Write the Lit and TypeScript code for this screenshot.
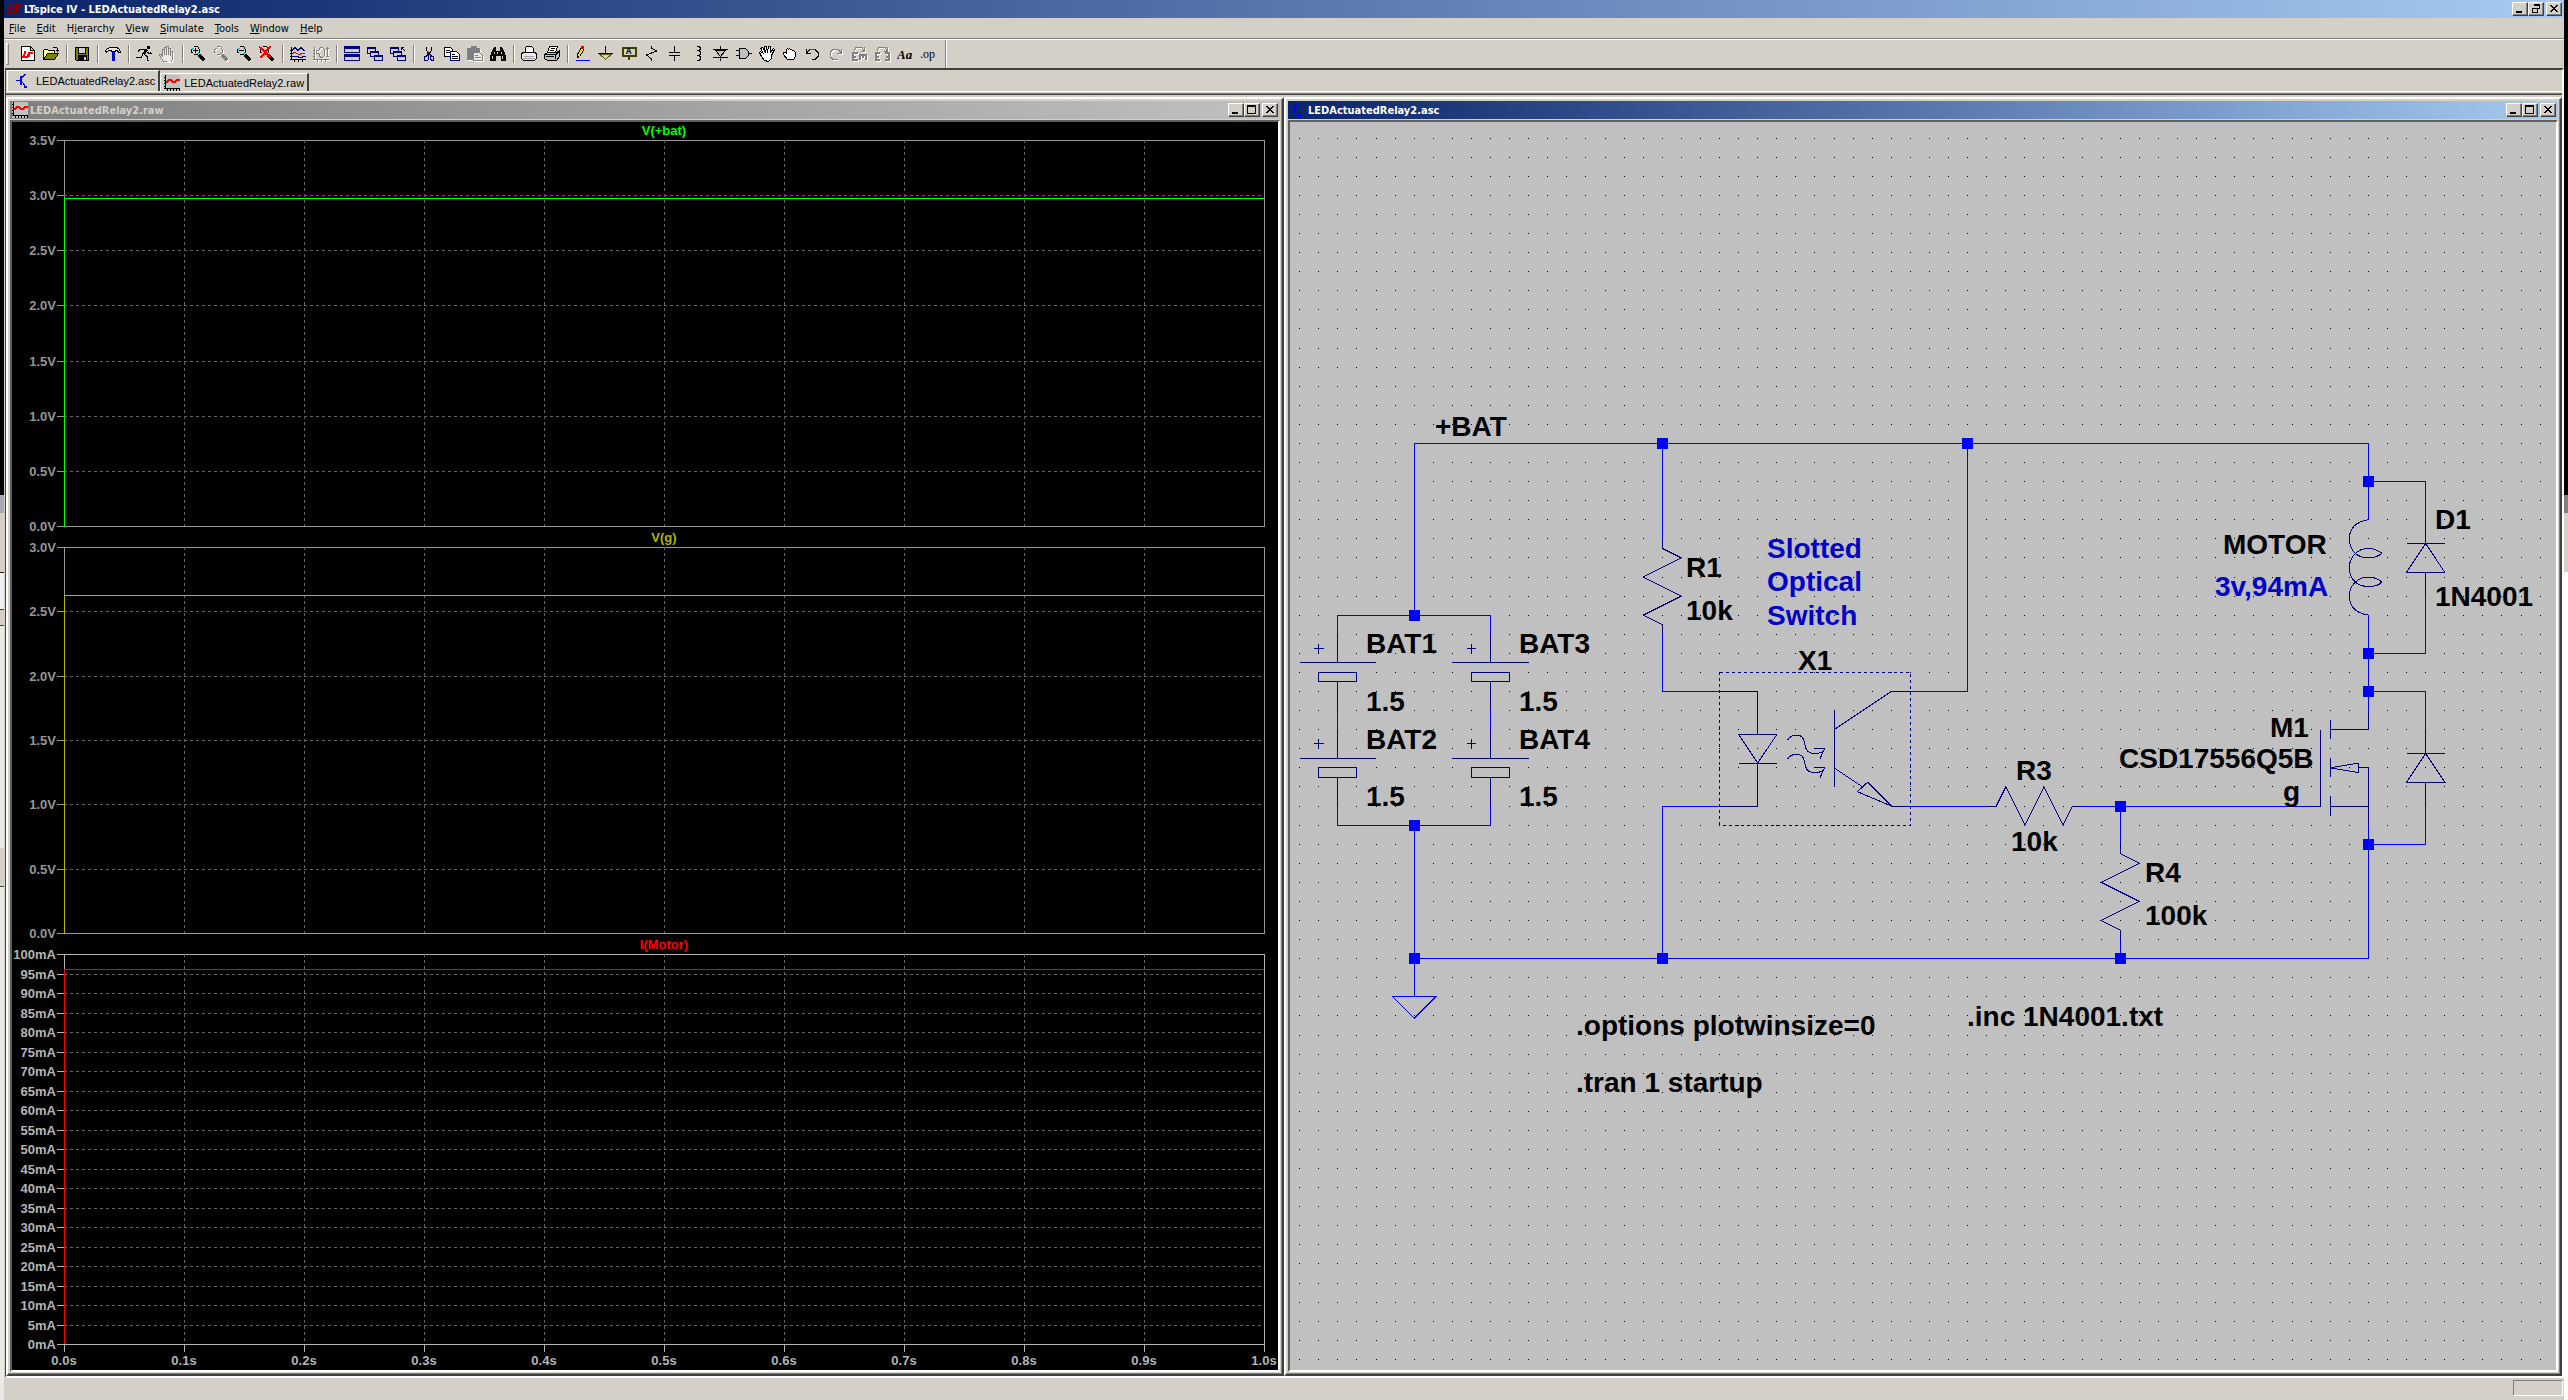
import { LitElement, css, html, svg } from "lit";
import { customElement, property } from "lit/decorators.js";

interface Pane {
  title: string;
  color: string;
  axis: string;
  top: number;
  bottom: number;
  trace: number;
  labels: string[];
}

interface Tool {
  name: string;
  icon: unknown;
  disabled?: boolean;
}

const volts = (max: number) =>
  Array.from({ length: max * 2 + 1 }, (_, i) => `${(i / 2).toFixed(1)}V`);

const PANES: Pane[] = [
  { title: "V(+bat)", color: "#00ff00", axis: "#969696", top: 18, bottom: 404, trace: 76, labels: volts(3.5) },
  { title: "V(g)", color: "#b4b400", axis: "#969696", top: 425, bottom: 811, trace: 473, labels: volts(3) },
  {
    title: "I(Motor)",
    color: "#ff0000",
    axis: "#b4b4b4",
    top: 832,
    bottom: 1222,
    trace: 847,
    labels: Array.from({ length: 21 }, (_, i) => `${i * 5}mA`),
  },
];

@customElement("wave-plot")
export class WavePlot extends LitElement {
  private left = 52;
  private right = 1252;

  private renderPane(pane: Pane) {
    const { left, right } = this;
    const step = (pane.bottom - pane.top) / (pane.labels.length - 1);
    const rows = pane.labels.map((label, i) => ({
      label,
      y: Math.round(pane.bottom - i * step),
    }));
    return svg`
      <g stroke=${pane.axis}>
        <rect x=${left + 0.5} y=${pane.top + 0.5} width=${right - left} height=${pane.bottom - pane.top} fill="none" />
        ${rows.map((r) => svg`<path d="M45 ${r.y + 0.5}H${left}" />`)}
      </g>
      <g class="grid">
        ${rows.slice(1, -1).map((r) => svg`<path d="M${left} ${r.y + 0.5}H${right}" />`)}
        ${Array.from({ length: 9 }, (_, i) => svg`
          <path d="M${left + 120 * (i + 1) + 0.5} ${pane.top}V${pane.bottom}" />`)}
      </g>
      <path d="M${left + 0.5} ${pane.bottom + 1}V${pane.trace + 0.5}H${right}" stroke=${pane.color} fill="none" />
      ${rows.map((r) => svg`<text x="44" y=${r.y + 5} text-anchor="end" fill=${pane.axis}>${r.label}</text>`)}
      <text x=${(left + right) / 2} y=${pane.top - 5} text-anchor="middle" fill=${pane.color}>${pane.title}</text>
    `;
  }

  render() {
    return html`
      <svg viewBox="0 0 1266 1248">
        ${PANES.map((pane) => this.renderPane(pane))}
        ${Array.from({ length: 11 }, (_, i) => svg`
          <path d="M${this.left + 120 * i + 0.5} 1222v8" stroke="#b4b4b4" />
          <text x=${this.left + 120 * i} y="1243" text-anchor="middle" fill="#b4b4b4">${(i / 10).toFixed(1)}s</text>`)}
      </svg>
    `;
  }

  static styles = css`
    :host {
      display: block;
      background: #000;
    }

    svg {
      display: block;
      width: 100%;
      height: auto;
    }

    path,
    rect {
      shape-rendering: crispEdges;
    }

    .grid {
      stroke: #646464;
      stroke-dasharray: 3 3;
    }

    text {
      font: bold 13px "Liberation Sans", Arial, sans-serif;
    }
  `;
}

// Wires and symbols are in schematic grid steps
const GRID = 19.083;
const GRID_X = 9.75;
const GRID_Y = 16.1;

const WIRES = [
  "M6 25V16H56V20M19 16V21M35 16V29H32",
  "M2 26V25H10V26M2 30V31M10 30V31M2 35V36H10V35M6 36V45M6 43H56V36",
  "M19 26V29H22M22 35H19V43M32 35H36M41 35H53M43 35V37M43 42V43",
  "M56 25V30M56 18H59V20M59 24V27H56M56 29H59V31M59 35V37H56",
  "M4.87 45H7.13L6 46.13Z",
].join("");

const resistorDown = (x: number, y: number) =>
  `M${x} ${y}v.5l1 .5l-2 1l2 1l-2 1l1 .5v.5`;

const battery = (x: number, y: number) =>
  `M${x} ${y}v1.5M${x - 2} ${y + 1.5}h4M${x - 1} ${y + 2}h2v.5h-2zM${x} ${y + 2.5}V${y + 4}` +
  `M${x - 1.25} ${y + 0.75}h.5M${x - 1} ${y + 0.5}v.5`;

const diodeUp = (x: number, y: number) =>
  `M${x} ${y}v1.25M${x - 1} ${y + 1.25}h2M${x} ${y + 1.25}l1 1.5h-2zM${x} ${y + 2.75}V${y + 4}`;

const photon = (y: number) =>
  `M25.55 ${y + 0.3}C25.8 ${y - 0.05} 26.35 ${y - 0.1} 26.45 ${y + 0.4}C26.5 ${y + 0.8} 26.6 ${y + 1} 27 ${y + 1}` +
  `C27.3 ${y + 1} 27.45 ${y + 0.9} 27.5 ${y + 0.75}M27 ${y + 0.75}H27.5L27.25 ${y + 1.3}`;

const SYMBOLS = [
  battery(2, 26),
  battery(2, 31),
  battery(10, 26),
  battery(10, 31),
  resistorDown(19, 21),
  resistorDown(43, 37),
  "M36 35h.5l.5 -1l1 2l1 -2l1 2l.5 -1h.5",
  "M22 29H24V31.25M23 31.25H25L24 32.75ZM23 32.75H25M24 32.75V35H22",
  photon(31.25),
  photon(32.25),
  "M28 30V34M28 31L31 29H32M28 33L29.5 34M31 35L29.22 34.25L29.76 33.75ZM31 35H32",
  "M56 20C55.4 20.1 55 20.4 55 21C55 21.6 55.4 22 56 22C56.4 22 56.6 21.85 56.7 21.75C56.5 21.6 56.3 21.5 56 21.5",
  "C55.4 21.5 55 22 55 22.5C55 23.1 55.4 23.5 56 23.5C56.4 23.5 56.6 23.4 56.7 23.25C56.5 23.1 56.3 23 56 23",
  "C55.4 23 55 23.5 55 24C55 24.6 55.4 24.9 56 25",
  diodeUp(59, 20),
  diodeUp(59, 31),
  "M56 30V31H54M54 30.5V31.5M54 32.5V33.5M54 34.5V35.5M54 35H56M53 35H53.5V31",
  "M54 33L55.5 32.75V33.25ZM55.5 33H56V36",
].join("");

const JUNCTIONS = [
  [19, 16], [35, 16], [56, 18], [6, 25], [56, 27], [56, 29],
  [43, 35], [6, 36], [56, 37], [6, 43], [19, 43], [43, 43],
];

const LABELS: [number, number, string][] = [
  [145, 314, "+BAT"],
  [396, 455, "R1"],
  [396, 498, "10k"],
  [76, 531, "BAT1"],
  [76, 589, "1.5"],
  [76, 627, "BAT2"],
  [76, 684, "1.5"],
  [229, 531, "BAT3"],
  [229, 589, "1.5"],
  [229, 627, "BAT4"],
  [229, 684, "1.5"],
  [508, 548, "X1"],
  [726, 658, "R3"],
  [721, 729, "10k"],
  [855, 760, "R4"],
  [855, 803, "100k"],
  [933, 432, "MOTOR"],
  [1145, 407, "D1"],
  [1145, 484, "1N4001"],
  [980, 615, "M1"],
  [829, 646, "CSD17556Q5B"],
  [993, 679, "g"],
  [286, 913, ".options plotwinsize=0"],
  [286, 970, ".tran 1 startup"],
  [677, 904, ".inc 1N4001.txt"],
];

const COMMENTS: [number, number, string][] = [
  [477, 436, "Slotted"],
  [477, 469, "Optical"],
  [477, 503, "Switch"],
  [925, 474, "3v,94mA"],
];

@customElement("schematic-view")
export class SchematicView extends LitElement {
  private gridDots() {
    let d = "";
    for (let j = 0; j < 65; j++) {
      for (let i = 0; i < 66; i++) {
        d += `M${Math.floor(GRID_X + GRID * i)} ${Math.floor(GRID_Y + GRID * j)}h1v1h-1z`;
      }
    }
    return d;
  }

  render() {
    return html`
      <svg viewBox="0 0 1266 1248">
        <path class="dots" d=${this.gridDots()} />
        <g class="drawing" transform="translate(${GRID_X} ${GRID_Y}) scale(${GRID})">
          <path class="symbol" d=${SYMBOLS} />
          <rect class="package" x="22" y="28" width="10" height="8" />
          <path class="wire" d=${WIRES} />
          ${JUNCTIONS.map(([x, y]) => svg`
            <rect class="junction" x=${x - 0.28} y=${y - 0.28} width=".576" height=".576" />`)}
        </g>
        ${LABELS.map(([x, y, label]) => svg`<text x=${x} y=${y}>${label}</text>`)}
        ${COMMENTS.map(([x, y, label]) => svg`<text class="comment" x=${x} y=${y}>${label}</text>`)}
      </svg>
    `;
  }

  static styles = css`
    :host {
      display: block;
      background: #c0c0c0;
    }

    svg {
      display: block;
      width: 100%;
      height: auto;
    }

    .dots {
      fill: #000;
      shape-rendering: crispEdges;
    }

    .drawing * {
      fill: none;
      stroke-width: 1px;
      vector-effect: non-scaling-stroke;
      shape-rendering: crispEdges;
    }

    .wire {
      stroke: #0000ff;
    }

    .symbol {
      stroke: #000080;
    }

    .package {
      stroke: #000080;
      stroke-dasharray: 3 3;
    }

    .drawing .junction {
      fill: #0000ff;
    }

    text {
      font: bold 28px "Liberation Sans", Arial, sans-serif;
    }

    .comment {
      fill: #0000c8;
    }
  `;
}

const lens = svg`
  <path d="M3.5.5h4M1.5 2.5v4M3.5 8.5h4M9.5 2.5v4M2 2.5l1.5 -1M8 1.5l1 1M2 6.5l1.5 1M9 6.5l-1 1" />
  <path d="M2.5 4v-1.5h1.5M7 7.5h1.5v-1.5" stroke="#00c8d8" />
  <path d="M9 9l5.5 5.5" stroke-width="3" />
`;

const waves = svg`
  <path d="M1.5 1v13M0 13.5h16M0 4.5h2M0 7.5h2M0 10.5h2M4.5 13v3M8.5 13v3M12.5 13v3" />
  <path d="M2 4.5l3 -3l3 3l3 -3l3 3h1M2 10.5h6l1 1h3l1 -1h3" stroke="#000080" />
  <path d="M2 7.5l3 -1l4 2l3 -1h3" stroke="#f00" />
`;

const cascade = svg`
  <g stroke="#000080">
    <rect x=".5" y="1.5" width="8" height="6" fill="#d4d0c8" /><path d="M0 2h9" stroke-width="2" />
    <rect x="3.5" y="5.5" width="8" height="5" fill="#d4d0c8" /><path d="M3 6h9" stroke-width="2" />
    <rect x="7.5" y="9.5" width="8" height="5" fill="#d4d0c8" /><path d="M7 10h9" stroke-width="2" />
  </g>
`;

const TOOLS: Tool[][] = [
  [
    {
      name: "New Schematic",
      icon: svg`
        <path d="M1.5.5h9l4 4v10h-13zM10.5.5v4h4" fill="#fff" />
        <path d="M5.5 5.5l-2 5h4l2 -4h3.5M10 7l-1.5 4" stroke="#f00" stroke-width="2" />`,
    },
    {
      name: "Open",
      icon: svg`
        <path d="M.5 13.5v-9l1 -1h3l1 1h6v3" fill="#ffff80" />
        <path d="M.5 13.5l4 -6h11l-4 6z" fill="#808000" />
        <path d="M9.5 2.5l1 -1h3l1 1v3M12.5 4.5h3" />`,
    },
  ],
  [
    {
      name: "Save",
      icon: svg`
        <path d="M1.5 1.5h13v13h-12l-1 -1z" fill="#808000" />
        <path d="M4.5 1.5h7v6h-7z" fill="#d4d0c8" />
        <path d="M4 9h9v6h-9z" fill="#000" stroke="none" /><path d="M10 11h2v3h-2z" fill="#d4d0c8" stroke="none" />`,
    },
  ],
  [
    {
      name: "Control Panel",
      icon: svg`
        <path d="M.5 4.5l2 -2l3 -1h6l2 1l2 3v1h-2l-1 -2h-2v1h-4v-1h-3l-2 2z" fill="#e8e8e8" />
        <path d="M8.5 6v9" stroke="#0000d0" stroke-width="3" />`,
    },
  ],
  [
    {
      name: "Run",
      icon: svg`
        <path d="M11 0h3v3h-3z" fill="#000" stroke="none" />
        <path d="M10.5 3.5l-3 5" stroke-width="3" />
        <path d="M9 3.5h-5l-2 2M10.5 5.5l2 1.5h3M8 8l3 2.5v4h2M7 8.5l-2 3h-5M14.5 6.5v-1" />`,
    },
    {
      name: "Halt",
      disabled: true,
      icon: svg`<path d="M4.5 15.5l-4 -6v-1h2l1 2v-7h2v5v-7h2v7v-8h2v8v-6h2v7v-4h2v8l-2 3z" fill="#e8e8e8" />`,
    },
  ],
  [
    { name: "Zoom to rectangle", icon: svg`${lens}<path d="M3 4.5h5M5.5 2v5" />` },
    { name: "Pan", icon: lens, disabled: true },
    { name: "Zoom back", icon: svg`${lens}<path d="M3 4.5h5" />` },
    { name: "Zoom full extents", icon: svg`${lens}<path d="M0 .5l12 11M11.5 0l-10 12" stroke="#f00" stroke-width="2" />` },
  ],
  [
    { name: "Autorange", icon: waves },
    {
      name: "Set plot limits",
      disabled: true,
      icon: svg`
        <path d="M1.5 1v13M0 13.5h16M0 4.5h2M0 7.5h2M0 10.5h2M4.5 13v3M8.5 13v3M12.5 13v3M14.5 1v10M13 2.5h3M13 10.5h3" />
        <path d="M9.5 1.5h-2l-2 3h-2v3h2l2 4h2M9.5 1.5l2 2v6l-2 2" />`,
    },
  ],
  [
    {
      name: "Tile windows",
      icon: svg`
        <path d="M.5.5h15v6h-15zM.5 8.5h15v6h-15z" stroke="#000080" />
        <path d="M0 1.5h16M0 9.5h16" stroke="#000080" stroke-width="3" />`,
    },
    { name: "Cascade windows", icon: cascade },
    { name: "Close windows", icon: svg`${cascade}<path d="M11.5 1.5l4 4M11 1.5h3M11.5 1v3" />` },
  ],
  [
    {
      name: "Cut",
      icon: svg`
        <path d="M5.5 1v3l3 5M10.5 1v3l-3 5" />
        <path d="M3.5 10.5h2l1 -2l1 2v3l-1 1h-3v-3zM9.5 8.5l1 2h2v4h-2l-1 -2z" stroke="#000080" />`,
    },
    {
      name: "Copy",
      icon: svg`
        <path d="M.5 1.5h6l2 2v7h-8z" fill="#fff" /><path d="M2 4.5h4M2 6.5h4" />
        <path d="M6.5 5.5h6l3 3v6h-9z" fill="#fff" stroke="#000080" /><path d="M8 8.5h3M8 10.5h6M8 12.5h6" />`,
    },
    {
      name: "Paste",
      disabled: true,
      icon: svg`
        <path d="M.5 2.5h12v11h-12zM4 .5h5v2h-5z" fill="#808080" />
        <path d="M6.5 6.5h6l3 3v5h-9z" fill="#e8e8e8" /><path d="M8 9.5h3M8 11.5h6" />`,
    },
    {
      name: "Find",
      icon: svg`
        <path d="M2 5l2 -4h2v4h4v-4h2l2 4l2 5v5h-5v-5h-5v5h-6v-5z" fill="#000" stroke="none" />
        <path d="M4.5 6v2M2.5 10v3M11.5 6v2M12.5 10v3M7.5 6v2" stroke="#d4d0c8" />`,
    },
  ],
  [
    {
      name: "Print Setup",
      icon: svg`
        <path d="M4.5 6.5v-5l1 -1h5l2 2v4" fill="#fff" />
        <path d="M.5 7.5l2 -1h11l2 1v5l-2 2h-11l-2 -2z" fill="#e8e8e8" /><path d="M3 10.5h10M2 12.5h12" stroke="#a0a0a0" />`,
    },
    {
      name: "Print",
      icon: svg`
        <path d="M3.5 6.5l2 -6h8l-2 6" fill="#fff" /><path d="M7 2.5h4M6 4.5h4" />
        <path d="M.5 8.5l3 -2h9l3 -2v6l-3 4h-9l-3 -2z" fill="#c0c0c0" /><path d="M.5 8.5h11v4M12 8.5l3 -3M2 10.5h8" />
        <path d="M7 11.5h3" stroke="#e0e000" />`,
    },
  ],
  [
    {
      name: "Draw Wire",
      icon: svg`
        <path d="M2.5 11.5v-3l4 -7h2v3l-4 6z" fill="#ffe000" /><path d="M6.5.5h2v2h-2z" stroke="#f00" />
        <path d="M1 14.5h14" stroke="#00f" />`,
    },
    { name: "Ground", icon: svg`<path d="M7.5 0v8M0 7.5h15" /><path d="M2 8.5h11l-5.5 5z" fill="#d4d0c8" stroke="#606000" />` },
    {
      name: "Label Net",
      icon: svg`
        <path d="M1.5 1.5h13v8h-13zM8 10v4" stroke="#404000" stroke-width="2" />
        <text class="mono" x="5" y="8">A</text>`,
    },
    { name: "Resistor", icon: svg`<path d="M7.5 0v2l5 3l-10 4l5 4v2" />` },
    { name: "Capacitor", icon: svg`<path d="M7.5 0v6M7.5 10v5M2 6.5h11M2 9.5h11" />` },
    { name: "Inductor", icon: svg`<path d="M6.5.5h2l2 1v2l-2 1h-2h2l2 1v3l-2 1h-2h2l2 1v3l-2 1h-2" />` },
    { name: "Diode", icon: svg`<path d="M7.5 0v4M7.5 11v4M0 3.5h15M0 11.5h15" /><path d="M2.5 4.5h10l-5 6z" fill="#c0c0c0" />` },
    { name: "Component", icon: svg`<path d="M0 4.5h4M0 9.5h4M13 7.5h3" /><path d="M3.5 2.5h6l3 3v4l-3 3h-6z" fill="#c0c0c0" />` },
    {
      name: "Move",
      icon: svg`<path d="M5.5 14.5l-3 -4l-2 -4l1 -1l3 2l-3 -5l2 -1l3 5l-1 -6h2l1 6l1 -6h2v6l3 -4l1 1l-3 6v3l-3 3z" fill="#fff" />`,
    },
    {
      name: "Drag",
      icon: svg`<path d="M5.5 13.5l-4 -5v-2h2l1 1v-4l1 -1l1 1l1 -1l1 1h1l1 1h1l2 2v4l-2 3z" fill="#fff" />`,
    },
    {
      name: "Undo",
      icon: svg`
        <path d="M1.5 3v4.5h4.5M2 6.5l3 -3h5l3 3v4l-3 3h-3" />
        <path d="M3 5.5l3 -2h4" stroke="#606000" />`,
    },
    { name: "Redo", disabled: true, icon: svg`<path d="M13.5 3v4.5h-4.5M13 6.5l-3 -3h-5l-3 3v4l3 3h5" />` },
    {
      name: "Rotate",
      disabled: true,
      icon: svg`
        <path d="M3 4.5l2 -3h6l2 3M13.5 1v4h-4" />
        <path d="M2 6v9M2 7h5M2 10.5h3M2 14h5M8 9h8M9 9v5M12 9v3M15 9v5" stroke-width="2" />`,
    },
    {
      name: "Mirror",
      disabled: true,
      icon: svg`
        <path d="M3 4.5l2 -3h6l2 3M13.5 1v4h-4" />
        <path d="M2 6v9M2 7h4M2 10.5h3M2 14h4M15 6v9M11 7h4M12 10.5h3M11 14h4" stroke-width="2" />`,
    },
    { name: "Text", icon: svg`<text class="script" x="0" y="13">Aa</text>` },
    { name: "SPICE Directive", icon: svg`<text class="serif" x="0" y="12">.op</text>` },
  ],
];

const transistorIcon = svg`
  <svg class="icon" viewBox="0 0 16 16" aria-hidden="true">
    <path d="M0 7.5h5M9.5 1l-4 4M6 9l4 5" stroke="#00f" />
    <path d="M5 2.5v9M8 13.5h3" stroke="#00f" stroke-width="2" />
  </svg>`;

const plotIcon = svg`
  <svg class="icon" viewBox="0 0 16 16" aria-hidden="true">
    <path d="M0 0h16v16h-16z" fill="#c0c0c0" stroke="none" />
    <path d="M1.5 0v14M0 13.5h16M0 2.5h2M0 5.5h2M0 8.5h2M0 11.5h2M3.5 13v3M6.5 13v3M9.5 13v3M12.5 13v3M15.5 13v3" />
    <path d="M2 8l3 -3h2l2 2h2l2 -2h3" stroke="#f00" stroke-width="2" />
  </svg>`;

const logoIcon = svg`
  <svg class="icon" viewBox="0 0 16 16" aria-hidden="true">
    <path d="M5 3l-3 9h6l2 -6h4M12 6l-2 7M7 4h7v3" stroke="#800000" stroke-width="2" />
  </svg>`;

@customElement("app-root")
export class AppRoot extends LitElement {
  @property({ type: String })
  file = "LEDActuatedRelay2";

  private menus: [string, string, string][] = [
    ["", "F", "ile"],
    ["", "E", "dit"],
    ["H", "i", "erarchy"],
    ["", "V", "iew"],
    ["", "S", "imulate"],
    ["", "T", "ools"],
    ["", "W", "indow"],
    ["", "H", "elp"],
  ];

  private renderTool(tool: Tool) {
    return html`
      <button class="tool" aria-label=${tool.name} ?disabled=${tool.disabled}>
        <svg class="icon" viewBox="0 0 16 16">${tool.icon}</svg>
      </button>
    `;
  }

  private renderCaption(middle: "restore" | "maximize") {
    const glyph =
      middle === "restore"
        ? svg`<path d="M5.5 3v-1.5h5v4h-2M5 2h6M3.5 5.5h5v4h-5zM3 5.5h6" />`
        : svg`<path d="M2.5 1.5h8v8h-8zM2 2h9" />`;
    return html`
      <div class="caption">
        <button aria-label="Minimize"><svg viewBox="0 0 14 12"><path d="M3 9h6" stroke-width="2" /></svg></button>
        <button aria-label=${middle}><svg viewBox="0 0 14 12">${glyph}</svg></button>
        <button class="close" aria-label="Close">
          <svg viewBox="0 0 14 12"><path d="M3 2l7 7M4 2l7 7M10 2l-7 7M11 2l-7 7" /></svg>
        </button>
      </div>
    `;
  }

  render() {
    return html`
      <div class="edge-left"></div>
      <div class="app">
        <header class="titlebar">
          ${logoIcon}
          <span class="title">LTspice IV - ${this.file}.asc</span>
          ${this.renderCaption("restore")}
        </header>
        <nav class="menubar">
          ${this.menus.map(([a, key, b]) => html`<button class="menu">${a}<u>${key}</u>${b}</button>`)}
        </nav>
        <div class="toolbar">
          <span class="grip"></span>
          ${TOOLS.map((group) => html`<div class="group">${group.map((t) => this.renderTool(t))}</div>`)}
        </div>
        <main class="client">
          <div class="tabs" role="tablist">
            <button class="tab active" role="tab" aria-selected="true">${transistorIcon}${this.file}.asc</button>
            <button class="tab" role="tab" aria-selected="false">${plotIcon}${this.file}.raw</button>
          </div>
          <div class="windows">
            <section class="window">
              <div class="titlebar inactive">
                ${plotIcon}
                <span class="title">${this.file}.raw</span>
                ${this.renderCaption("maximize")}
              </div>
              <wave-plot class="content"></wave-plot>
            </section>
            <section class="window">
              <div class="titlebar">
                ${transistorIcon}
                <span class="title">${this.file}.asc</span>
                ${this.renderCaption("maximize")}
              </div>
              <schematic-view class="content"></schematic-view>
            </section>
          </div>
        </main>
        <footer class="status"><span class="cell"></span></footer>
      </div>
      <div class="edge-right"></div>
    `;
  }

  static styles = css`
    :host {
      display: grid;
      grid-template-columns: 4px minmax(0, 1fr) 4px;
      min-height: 100vh;
      background: #d4d0c8;
      color: #000;
      font: 11px "DejaVu Sans Condensed", "DejaVu Sans", sans-serif;
    }

    * {
      box-sizing: border-box;
    }

    button {
      margin: 0;
      padding: 0;
      border: 0;
      background: none;
      color: inherit;
      font: inherit;
    }

    svg {
      display: block;
      fill: none;
      stroke: #000;
      shape-rendering: crispEdges;
    }

    .icon {
      width: 16px;
      height: 16px;
      flex: none;
    }

    .edge-left {
      background: linear-gradient(
        #000 495px, #a8a8b0 495px 513px, #d4d0c8 513px 572px, #202020 572px 573px,
        #f0f0f0 573px 609px, #404040 609px 610px, #d4d0c8 610px 625px, #404040 625px 626px,
        #ebe9e5 626px 848px, #d4d0c8 848px 886px, #404040 886px 887px, #ebe9e5 887px
      );
    }

    .edge-right {
      background: linear-gradient(#000 495px, #808080 495px 513px, #d4d0c8 513px 572px, #fff 572px);
    }

    .app {
      display: flex;
      flex-direction: column;
    }

    .titlebar {
      display: flex;
      align-items: center;
      gap: 2px;
      height: 18px;
      padding: 0 2px;
      background: linear-gradient(to right, #0a246a, #a6caf0);
      color: #fff;
      font-weight: bold;
    }

    .titlebar.inactive {
      background: linear-gradient(to right, #808080, #c0c0c0);
      color: #d4d0c8;
    }

    .title {
      flex: 1;
      white-space: nowrap;
    }

    .caption {
      display: flex;
    }

    .caption button {
      width: 16px;
      height: 14px;
      padding: 0;
      background: #d4d0c8;
      border: 1px solid;
      border-color: #fff #404040 #404040 #fff;
      box-shadow: inset -1px -1px #808080;
    }

    .caption .close {
      margin-left: 2px;
    }

    .menubar {
      display: flex;
      gap: 11px;
      height: 20px;
      padding: 0 5px;
      align-items: center;
    }

    .toolbar {
      display: flex;
      height: 30px;
      align-items: center;
      border-top: 1px solid #808080;
      box-shadow: inset 0 1px #fff;
      padding: 1px 0 0 2px;
    }

    .grip {
      width: 3px;
      height: 22px;
      margin-right: 8px;
      border: 1px solid;
      border-color: #fff #808080 #808080 #fff;
    }

    .group {
      display: flex;
    }

    .group::after {
      content: "";
      margin: 2px 3px;
      border-left: 1px solid #808080;
      border-right: 1px solid #fff;
    }

    .group:last-child::after {
      margin: -3px 5px;
    }

    .tool {
      width: 23px;
      height: 22px;
      padding: 3px;
    }

    .tool:disabled svg {
      filter: grayscale(1) drop-shadow(1px 1px 0 #fff);
      stroke: #808080;
    }

    text {
      stroke: none;
      fill: #000;
    }

    .mono {
      font: bold 9px "Liberation Mono", monospace;
    }

    .script {
      font: italic bold 13px "Liberation Serif", serif;
    }

    .serif {
      font: 12px "Liberation Serif", serif;
    }

    .client {
      margin-left: 1px;
      border: 2px solid;
      border-left-width: 1px;
      border-color: #404040 #fff #fff #404040;
    }

    .tabs {
      display: flex;
      align-items: flex-end;
      height: 25px;
      padding: 0 1px 3px;
      border-bottom: 1px solid #404040;
      background: linear-gradient(#fff, #fff) 0 21px / 100% 1px no-repeat,
        linear-gradient(#808080, #808080) 0 23px / 100% 1px no-repeat;
      font-family: "Liberation Sans", Arial, sans-serif;
    }

    .tab {
      display: flex;
      align-items: center;
      gap: 4px;
      height: 18px;
      padding: 0 3px;
      background: #d4d0c8;
      border-top: 1px solid #fff;
      border-left: 1px solid #fff;
      border-right: 2px solid #404040;
    }

    .tab.active {
      height: 21px;
      padding-left: 8px;
    }

    .windows {
      display: grid;
      grid-template-columns: repeat(2, minmax(0, 1fr));
      padding-top: 2px;
    }

    .window {
      padding: 2px;
      border: 2px solid;
      border-color: #fff #404040 #404040 #fff;
      box-shadow: inset -1px -1px #808080;
    }

    .content {
      margin-top: 1px;
      border: 2px solid;
      border-color: #606060 #fff #fff #606060;
    }

    .status {
      display: flex;
      justify-content: flex-end;
      flex: 1;
      height: 22px;
      padding: 2px 1px 4px;
    }

    .cell {
      width: 50px;
      border: 1px solid;
      border-color: #808080 #fff #fff #808080;
    }
  `;
}

declare global {
  interface HTMLElementTagNameMap {
    "app-root": AppRoot;
    "wave-plot": WavePlot;
    "schematic-view": SchematicView;
  }
}
